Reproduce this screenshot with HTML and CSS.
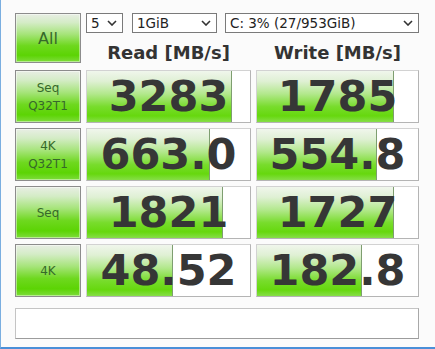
FILE: index.html
```html
<!DOCTYPE html>
<html>
<head>
<meta charset="utf-8">
<link rel="stylesheet" href="styles.css">
</head>
<body>
<div class="window">
  <div class="top">
    <div class="btn all">All</div>
    <div class="topright">
      <div class="selects">
        <div class="sel sel-count"><span>5</span><svg class="chev" viewBox="0 0 10 6" width="10" height="6"><path d="M1 1 L5 5 L9 1" fill="none" stroke="#333" stroke-width="1.6"/></svg></div>
        <div class="sel sel-size"><span>1GiB</span><svg class="chev" viewBox="0 0 10 6" width="10" height="6"><path d="M1 1 L5 5 L9 1" fill="none" stroke="#333" stroke-width="1.6"/></svg></div>
        <div class="sel sel-drive"><span>C: 3% (27/953GiB)</span><svg class="chev" viewBox="0 0 10 6" width="10" height="6"><path d="M1 1 L5 5 L9 1" fill="none" stroke="#333" stroke-width="1.6"/></svg></div>
      </div>
      <div class="heads">
        <div class="head">Read [MB/s]</div>
        <div class="head">Write [MB/s]</div>
      </div>
    </div>
  </div>
  <div class="rows">
    <div class="row">
      <div class="btn label"><span>Seq</span><span>Q32T1</span></div>
      <div class="cell"><div class="bar" style="width:145px"></div><span class="num">3283</span></div>
      <div class="cell"><div class="bar" style="width:137px"></div><span class="num">1785</span></div>
    </div>
    <div class="row">
      <div class="btn label"><span>4K</span><span>Q32T1</span></div>
      <div class="cell"><div class="bar" style="width:123px"></div><span class="num">663.0</span></div>
      <div class="cell"><div class="bar" style="width:120px"></div><span class="num">554.8</span></div>
    </div>
    <div class="row">
      <div class="btn label"><span>Seq</span></div>
      <div class="cell"><div class="bar" style="width:136px"></div><span class="num">1821</span></div>
      <div class="cell"><div class="bar" style="width:137px"></div><span class="num">1727</span></div>
    </div>
    <div class="row">
      <div class="btn label"><span>4K</span></div>
      <div class="cell"><div class="bar" style="width:86px"></div><span class="num">48.52</span></div>
      <div class="cell"><div class="bar" style="width:105px"></div><span class="num">182.8</span></div>
    </div>
  </div>
  <div class="comment"></div>
</div>
</body>
</html>
```
FILE: styles.css
```css
html, body {
  margin: 0;
  padding: 0;
  background: #fbfbfb;
}
.window {
  box-sizing: border-box;
  width: 435px;
  height: 349px;
  border-left: 1px solid #7aaee0;
  border-bottom: 2px solid #4a8fd8;
  padding: 13px 0 0 14px;
  background: #fbfbfb;
  font-family: "DejaVu Sans", Verdana, sans-serif;
}
.top {
  display: flex;
  column-gap: 5px;
}
.btn {
  box-sizing: border-box;
  border: 1px solid #8c8c8c;
  box-shadow: inset 0 0 0 1px rgba(255,255,255,0.45);
  background: linear-gradient(to bottom, #e8eee4 0%, #d4ecc6 18%, #a6e47a 42%, #6ed81e 66%, #5cd404 86%, #7edc3c 100%);
  color: #36692a;
  display: flex;
  flex-direction: column;
  align-items: center;
  justify-content: center;
}
.all {
  width: 66px;
  height: 50px;
  font-size: 16px;
}
.topright {
  display: flex;
  flex-direction: column;
  width: 333px;
}
.selects {
  display: flex;
  height: 20px;
}
.sel {
  box-sizing: border-box;
  height: 20px;
  border: 1px solid #7a7a7a;
  background: #ffffff;
  display: flex;
  align-items: center;
  justify-content: space-between;
  padding: 0 5px 0 4px;
  font-size: 13.5px;
  color: #222;
}
.sel-count { width: 37px; margin-right: 9px; }
.sel-size { width: 85px; margin-right: 8px; }
.sel-drive { width: 194px; }
.chev { display: block; }
.heads {
  display: grid;
  grid-template-columns: 165px 163px;
  column-gap: 5px;
  height: 30px;
  align-items: center;
}
.head {
  text-align: center;
  font-weight: bold;
  font-size: 18px;
  color: #333333;
  padding-top: 8px;
}
.rows {
  display: flex;
  flex-direction: column;
  row-gap: 5px;
  margin-top: 7px;
}
.row {
  display: grid;
  grid-template-columns: 66px 165px 163px;
  column-gap: 5px;
  height: 53px;
}
.label {
  font-size: 12px;
  line-height: 18px;
}
.cell {
  box-sizing: border-box;
  position: relative;
  background: #ffffff;
  border: 1px solid #d2d2d2;
  border-right-color: #b4b4b4;
  border-bottom-color: #b4b4b4;
  display: flex;
  align-items: center;
  justify-content: center;
  overflow: hidden;
}
.bar {
  position: absolute;
  left: 0;
  top: 0;
  bottom: 0;
  box-sizing: border-box;
  border-right: 1px solid #7e9e70;
  background: linear-gradient(to bottom, #f0f6ec 0%, #dff0d4 20%, #b2e88c 45%, #78dc2c 70%, #66d80e 88%, #86de48 100%);
}
.num {
  position: relative;
  font-weight: bold;
  font-size: 43px;
  line-height: 1;
  color: #363636;
}
.comment {
  box-sizing: border-box;
  width: 404px;
  height: 31px;
  margin-top: 11px;
  background: #ffffff;
  border: 1px solid #c4c4c4;
  border-bottom-color: #9c9c9c;
  border-right-color: #a8a8a8;
}
```
